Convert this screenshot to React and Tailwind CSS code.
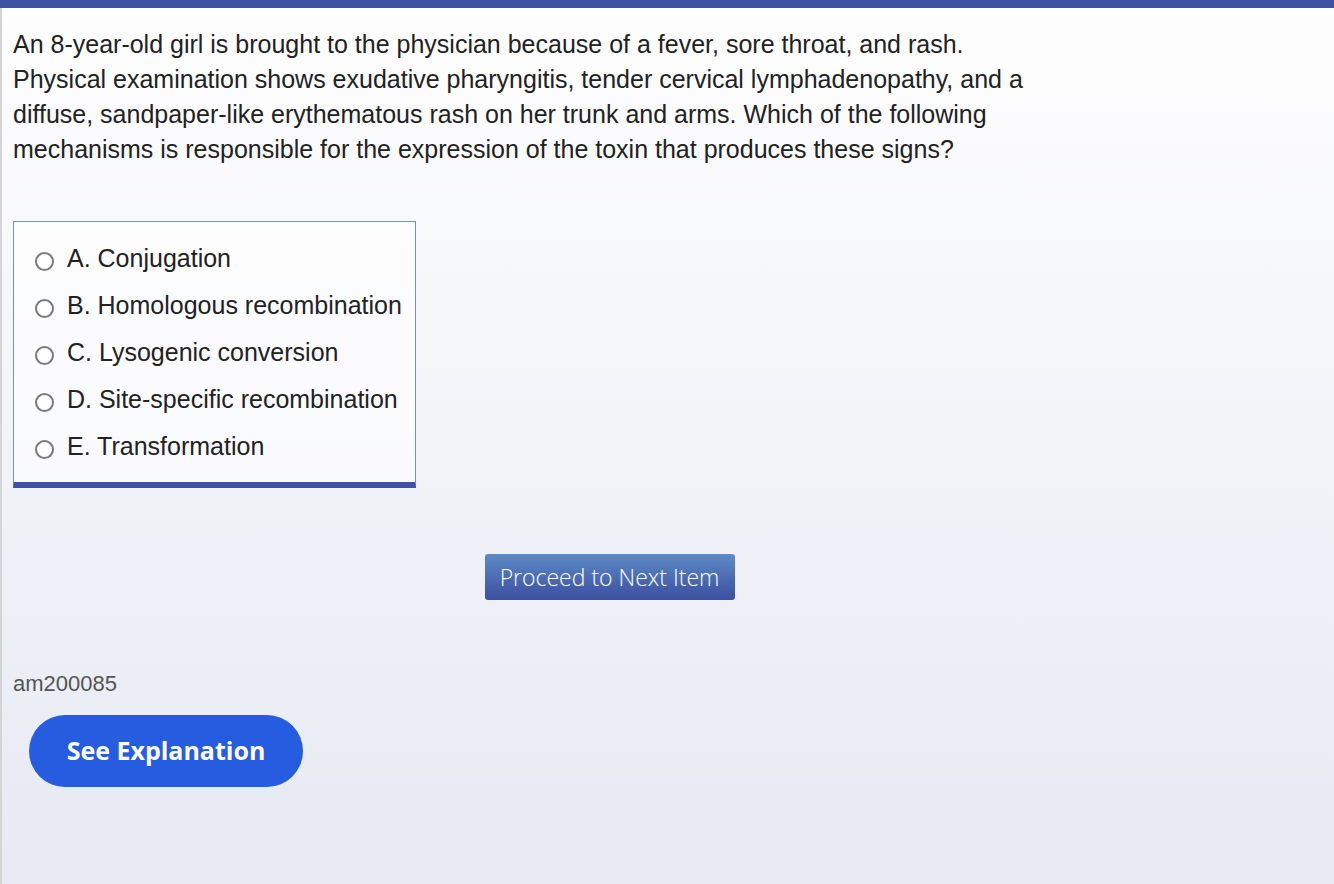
import React from 'react';

const choices = [
  'A. Conjugation',
  'B. Homologous recombination',
  'C. Lysogenic conversion',
  'D. Site-specific recombination',
  'E. Transformation',
];

const App = () => {
  return (
    <div className="min-h-[884px] flex flex-col bg-gradient-to-b from-[#fefefe] to-[#e7e9f3] font-['Liberation_Sans',Arial,sans-serif]">
      <div className="h-[8px] bg-[#3f51a2] shrink-0"></div>
      <div className="flex-1 border-l-2 border-[#d4d4d6] pl-[11px] pt-[19px]">
        <p className="max-w-[1030px] text-[25px] leading-[35px] text-[#222]">
          An 8-year-old girl is brought to the physician because of a fever, sore throat, and rash. Physical examination shows exudative pharyngitis, tender cervical lymphadenopathy, and a diffuse, sandpaper-like erythematous rash on her trunk and arms. Which of the following mechanisms is responsible for the expression of the toxin that produces these signs?
        </p>

        <div className="mt-[54px] w-[403px] border border-[#7d8cc8] border-b-[6px] border-b-[#3f51a2] bg-white/60 pt-[13px] pb-[12px]">
          {choices.map((c) => (
            <label key={c} className="flex items-center h-[47px] pl-[21px] cursor-pointer">
              <span className="w-[19px] h-[19px] rounded-full border-2 border-[#7a7a7a] bg-white mt-[6px] shrink-0"></span>
              <span className="ml-[13px] text-[25px] text-[#222]">{c}</span>
            </label>
          ))}
        </div>

        <div className="mt-[66px] flex justify-center pr-[128px]">
          <button className="h-[46px] w-[250px] rounded-[3px] bg-gradient-to-b from-[#5d8bc8] to-[#3c4f9f] text-white text-[23px] font-['Open_Sans',sans-serif] font-light">
            Proceed to Next Item
          </button>
        </div>

        <div className="mt-[67px] text-[22px] text-[#555]">am200085</div>

        <button className="mt-[15px] ml-[16px] h-[72px] w-[274px] rounded-full bg-[#255ce0] text-white text-[25px] font-bold font-['Open_Sans',sans-serif]">
          See Explanation
        </button>
      </div>
    </div>
  );
};

export default App;
